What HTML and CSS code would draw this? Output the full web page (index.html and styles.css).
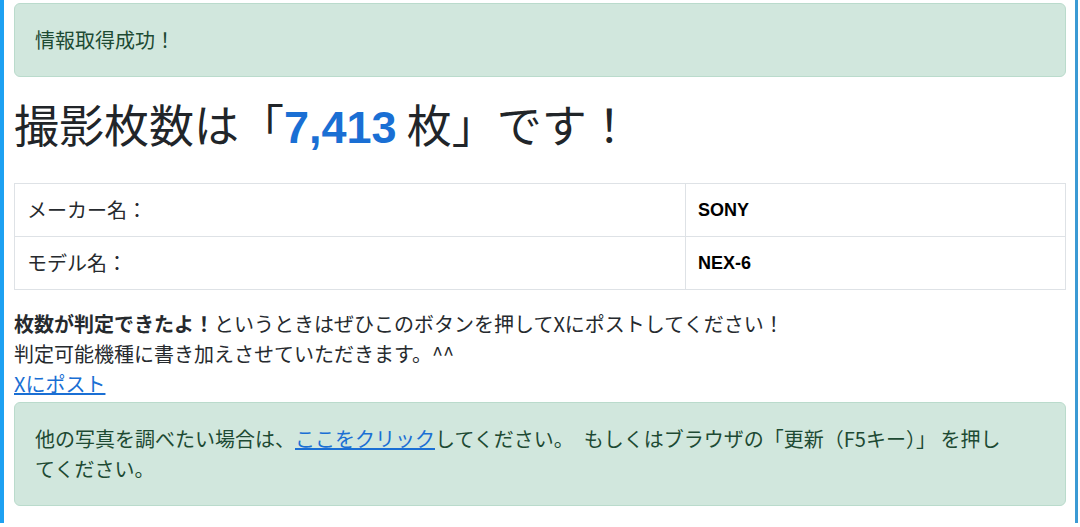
FILE: index.html
```html
<!DOCTYPE html>
<html lang="ja">
<head>
  <meta charset="utf-8">
  <title>撮影枚数チェック</title>
  <link rel="stylesheet" href="styles.css">
</head>
<body>
<div class="frame">
  <div class="alert">情報取得成功！</div>

  <h1 class="count">撮影枚数は「<span class="num">7,413</span> 枚」です！</h1>

  <table class="info">
    <tr>
      <td class="label">メーカー名：</td>
      <td class="value">SONY</td>
    </tr>
    <tr>
      <td class="label">モデル名：</td>
      <td class="value">NEX-6</td>
    </tr>
  </table>

  <p class="note">
    <b>枚数が判定できたよ！</b>というときはぜひこのボタンを押してXにポストしてください！<br>
    判定可能機種に書き加えさせていただきます。^^<br>
    <a href="#">Xにポスト</a>
  </p>

  <div class="alert alert-wide">他の写真を調べたい場合は、<a href="#">ここをクリック</a>してください。　もしくはブラウザの「更新（F5キー）」 を押してください。</div>
</div>
</body>
</html>
```

FILE: styles.css
```css
body{
  margin: 0;
  background: #fff;
  font-family: "Noto Sans CJK JP", "Noto Sans", sans-serif;
  font-size: 20px;
  line-height: 30px;
  color: #262a2e;
}
.frame{
  width: 1078px;
  height: 523px;
  box-sizing: border-box;
  border-left: 4px solid #1da1f2;
  border-right: 3px solid #3b9ad4;
  padding: 3px 9px 0 10px;
}
.alert{
  background: #d1e7dd;
  border: 1px solid #badbcc;
  border-radius: 6px;
  color: #1d4a33;
  padding: 21px 20px;
}
.alert-wide{
  padding-right: 50px;
}
.alert a{
  color: #1a6fd4;
}
.count{
  margin: 20px 0 28px;
  font-size: 45px;
  line-height: 54px;
  font-weight: 400;
  color: #212529;
}
.count .num{
  font-family: "Liberation Sans", Arial, sans-serif;
  font-weight: 700;
  color: #1a6fd4;
}
.info{
  width: 100%;
  border-collapse: collapse;
  margin-bottom: 19px;
}
.info td{
  border: 1px solid #dee2e6;
  padding: 11px 12px;
  height: 30px;
}
.info td.label{
  width: 646px;
}
.info td.value{
  font-family: "Liberation Sans", Arial, sans-serif;
  font-weight: 700;
  font-size: 18px;
  color: #000;
}
.note{
  margin: 0 0 3px;
}
.note a{
  color: #1a6fd4;
}
```
